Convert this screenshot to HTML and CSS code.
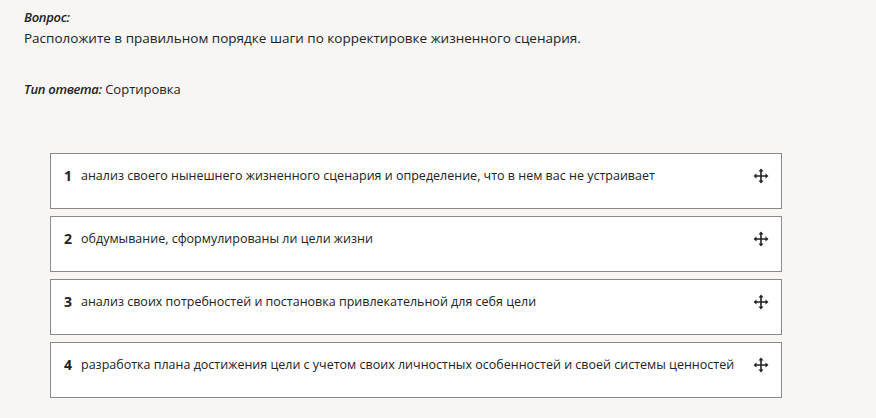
FILE: index.html
```html
<!DOCTYPE html>
<html lang="ru">
<head>
<meta charset="utf-8">
<link rel="stylesheet" href="styles.css">
</head>
<body>
<div class="page">
  <div class="q-label">Вопрос:</div>
  <div class="q-text">Расположите в правильном порядке шаги по корректировке жизненного сценария.</div>
  <div class="type"><span class="type-label">Тип ответа:</span> Сортировка</div>
  <div class="list">
    <div class="item"><span class="num">1</span><span class="text">анализ своего нынешнего жизненного сценария и определение, что в нем вас не устраивает</span><svg class="move" viewBox="0 0 16 16"><path d="M8 2v12M2 8h12" stroke="#222" stroke-width="1.6" fill="none"/><path d="M8 0.5L10.5 3.5H5.5Z M8 15.5L10.5 12.5H5.5Z M0.5 8L3.5 5.5V10.5Z M15.5 8L12.5 5.5V10.5Z" fill="#222"/></svg></div>
    <div class="item"><span class="num">2</span><span class="text">обдумывание, сформулированы ли цели жизни</span><svg class="move" viewBox="0 0 16 16"><path d="M8 2v12M2 8h12" stroke="#222" stroke-width="1.6" fill="none"/><path d="M8 0.5L10.5 3.5H5.5Z M8 15.5L10.5 12.5H5.5Z M0.5 8L3.5 5.5V10.5Z M15.5 8L12.5 5.5V10.5Z" fill="#222"/></svg></div>
    <div class="item"><span class="num">3</span><span class="text">анализ своих потребностей и постановка привлекательной для себя цели</span><svg class="move" viewBox="0 0 16 16"><path d="M8 2v12M2 8h12" stroke="#222" stroke-width="1.6" fill="none"/><path d="M8 0.5L10.5 3.5H5.5Z M8 15.5L10.5 12.5H5.5Z M0.5 8L3.5 5.5V10.5Z M15.5 8L12.5 5.5V10.5Z" fill="#222"/></svg></div>
    <div class="item"><span class="num">4</span><span class="text">разработка плана достижения цели с учетом своих личностных особенностей и своей системы ценностей</span><svg class="move" viewBox="0 0 16 16"><path d="M8 2v12M2 8h12" stroke="#222" stroke-width="1.6" fill="none"/><path d="M8 0.5L10.5 3.5H5.5Z M8 15.5L10.5 12.5H5.5Z M0.5 8L3.5 5.5V10.5Z M15.5 8L12.5 5.5V10.5Z" fill="#222"/></svg></div>
  </div>
</div>
</body>
</html>
```
FILE: styles.css
```css
html, body {
  margin: 0;
  padding: 0;
  background: #f7f6f4;
}
body {
  font-family: "Open Sans", "Noto Sans", sans-serif;
  color: #222;
  width: 876px;
  height: 418px;
  overflow: hidden;
}
.page {
  padding: 8px 24px 0 24px;
}
.q-label {
  font-size: 13px;
  font-weight: 600;
  font-style: italic;
  line-height: 18px;
  letter-spacing: -0.3px;
}
.q-text {
  font-size: 13.5px;
  line-height: 24px;
}
.type {
  margin-top: 29px;
  font-size: 13px;
  line-height: 20px;
}
.type-label {
  font-weight: 600;
  font-style: italic;
  letter-spacing: -0.3px;
}
.list {
  margin: 54px 0 0 26px;
  width: 732px;
  display: flex;
  flex-direction: column;
  gap: 7px;
}
.item {
  box-sizing: border-box;
  height: 56px;
  background: #fff;
  border: 1px solid #8a8a8a;
  display: flex;
  align-items: flex-start;
  padding: 12px 0 0 13px;
}
.num {
  font-size: 14px;
  font-weight: 700;
  width: 17px;
  line-height: 20px;
}
.text {
  font-size: 12.5px;
  line-height: 20px;
  flex: 1;
}
.move {
  width: 16px;
  height: 16px;
  margin: 2px 12px 0 8px;
}
```
